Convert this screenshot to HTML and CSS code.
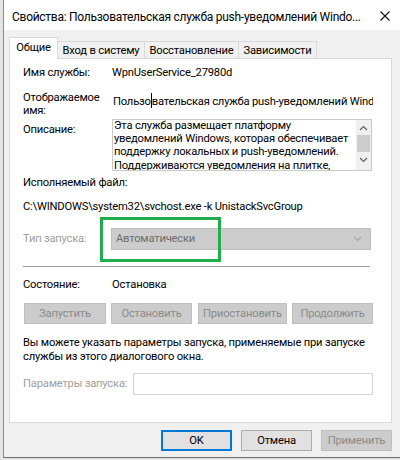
FILE: index.html
```html
<!DOCTYPE html>
<html lang="ru">
<head>
<meta charset="utf-8">
<title>Свойства</title>
<link rel="stylesheet" href="styles.css">
</head>
<body>
<div class="window">
  <div class="titlebar">
    <span class="title">Свойства: Пользовательская служба push-уведомлений Windo...</span>
    <svg class="close" width="10" height="10" viewBox="0 0 10 10"><path d="M0.5 0.5 L9.5 9.5 M9.5 0.5 L0.5 9.5" stroke="#111" stroke-width="1.1" fill="none"/></svg>
  </div>
  <div class="body">
    <div class="tabs">
      <div class="tab active t1">Общие</div>
      <div class="tab t2">Вход в систему</div>
      <div class="tab t3">Восстановление</div>
      <div class="tab t4">Зависимости</div>
    </div>
    <div class="panel">
      <div class="row r-name"><span class="label">Имя службы:</span><span class="value">WpnUserService_27980d</span></div>
      <div class="row r-display"><span class="label two">Отображаемое<br>имя:</span><div class="value display-value">Пользо<span class="caret"></span>вательская служба push-уведомлений Windows</div></div>
      <div class="row r-desc"><span class="label desc-label">Описание:</span>
        <div class="descbox">
          <div class="desctext">Эта служба размещает платформу<br>уведомлений Windows, которая обеспечивает<br>поддержку локальных и push-уведомлений.<br>Поддерживаются уведомления на плитке,</div>
          <div class="scrollbar">
            <svg class="sb-up" width="9" height="6" viewBox="0 0 9 6"><polyline points="1,5 4.5,1.5 8,5" fill="none" stroke="#606060" stroke-width="1.2"/></svg>
            <div class="sb-thumb"></div>
            <svg class="sb-down" width="9" height="6" viewBox="0 0 9 6"><polyline points="1,1 4.5,4.5 8,1" fill="none" stroke="#606060" stroke-width="1.2"/></svg>
          </div>
        </div>
      </div>
      <div class="r-exe-label">Исполняемый файл:</div>
      <div class="r-exe">C:\WINDOWS\system32\svchost.exe -k UnistackSvcGroup</div>
      <div class="row r-type"><span class="label disabled">Тип запуска:</span>
        <div class="combo"><span>Автоматически</span><svg width="9" height="6" viewBox="0 0 9 6"><polyline points="1,1 4.5,4.5 8,1" fill="none" stroke="#a6a6a6" stroke-width="1.1"/></svg></div>
      </div>
      <div class="sep"></div>
      <div class="row r-state"><span class="label">Состояние:</span><span>Остановка</span></div>
      <div class="svc-buttons">
        <button class="btn dis b-start">Запустить</button>
        <button class="btn dis b-stop">Остановить</button>
        <button class="btn dis b-pause">Приостановить</button>
        <button class="btn dis b-cont">Продолжить</button>
      </div>
      <p class="hint">Вы можете указать параметры запуска, применяемые при запуске<br>службы из этого диалогового окна.</p>
      <div class="row r-params"><span class="label disabled params-label">Параметры запуска:</span><div class="input"></div></div>
    </div>
    <div class="footer">
      <button class="btn fb default">OK</button>
      <button class="btn fb">Отмена</button>
      <button class="btn fb dis">Применить</button>
    </div>
  </div>
  <div class="highlight"></div>
</div>
</body>
</html>
```
FILE: styles.css
```css
html, body {
  margin: 0;
  padding: 0;
}
body {
  background: #e4e4e4;
  font-family: Roboto, "Liberation Sans", sans-serif;
  font-size: 11.2px;
  letter-spacing: -0.2px;
  line-height: 14px;
  color: #000;
  width: 400px;
  height: 460px;
  overflow: hidden;
}
.window {
  position: relative;
  margin-left: 3px;
  width: 397px;
  height: 458px;
  box-sizing: border-box;
  border-left: 1px solid #8c8c8c;
  border-bottom: 1px solid #707070;
  background: #f0f0f0;
}
.titlebar {
  height: 30px;
  background: #fff;
  display: flex;
  align-items: center;
  padding-left: 8px;
}
.title {
  flex: 1;
  font-size: 12px;
  letter-spacing: -0.27px;
  white-space: nowrap;
  overflow: hidden;
  padding-top: 3px;
}
.close {
  margin-right: 10px;
  margin-top: 2px;
}
.body {
  padding: 7px 8px 0 5px;
}
.tabs {
  display: flex;
  align-items: flex-end;
  height: 21px;
  position: relative;
  z-index: 1;
}
.tab {
  box-sizing: border-box;
  height: 17px;
  border: 1px solid #d9d9d9;
  border-bottom: none;
  border-left: none;
  background: #f0f0f0;
  display: flex;
  align-items: center;
  justify-content: center;
  white-space: nowrap;
  padding-top: 1px;
}
.tab.active {
  height: 22px;
  margin-bottom: -1px;
  background: #fff;
  border-left: 1px solid #d9d9d9;
  padding-bottom: 2px;
}
.t1 { width: 49px; }
.t2 { width: 87px; }
.t3 { width: 94px; }
.t4 { width: 78px; }
.panel {
  height: 365px;
  box-sizing: border-box;
  background: #fff;
  border: 1px solid #d9d9d9;
  padding: 7px 18px 0 13px;
}
.row {
  display: flex;
}
.label {
  width: 89px;
  flex: none;
  white-space: nowrap;
}
.value {
  white-space: nowrap;
}
.r-display {
  margin-top: 11px;
}
.two {
  line-height: 13px;
}
.display-value {
  width: 260px;
  overflow: hidden;
  padding-top: 2px;
  padding-left: 1px;
}
.caret {
  display: inline-block;
  width: 1px;
  height: 15px;
  background: #000;
  vertical-align: -3px;
}
.r-desc {
  margin-top: 2px;
}
.desc-label {
  padding-top: 4px;
}
.descbox {
  width: 260px;
  height: 52px;
  box-sizing: border-box;
  border: 1px solid #c9c9c9;
  display: flex;
  overflow: hidden;
}
.desctext {
  flex: 1;
  padding-left: 1px;
  white-space: nowrap;
  overflow: hidden;
  line-height: 13.2px;
  margin-top: -1px;
}
.scrollbar {
  width: 15px;
  flex: none;
  background: #f0f0f0;
  display: flex;
  flex-direction: column;
  align-items: center;
}
.sb-up {
  margin-top: 5px;
}
.sb-thumb {
  width: 13px;
  height: 17px;
  margin-top: 4px;
  background: #cdcdcd;
}
.sb-down {
  margin-top: 5px;
}
.r-exe-label {
  margin-top: 5px;
}
.r-exe {
  margin-top: 10px;
  white-space: nowrap;
}
.r-type {
  margin-top: 14px;
  align-items: center;
}
.disabled {
  color: #a0a0a0;
}
.combo {
  width: 260px;
  height: 22px;
  box-sizing: border-box;
  margin-left: -1px;
  background: #cccccc;
  border: 1px solid #bfbfbf;
  display: flex;
  align-items: center;
  justify-content: space-between;
  padding: 0 8px 0 4px;
  color: #6d6d6d;
}
.sep {
  margin-top: 16px;
  width: 347px;
  height: 1px;
  background: #a0a0a0;
}
.r-state {
  margin-top: 11px;
}
.svc-buttons {
  margin-top: 11px;
  display: flex;
}
.btn {
  font: inherit;
  letter-spacing: inherit;
  margin: 0;
  padding: 0;
  height: 21px;
  box-sizing: border-box;
  background: #e1e1e1;
  border: 1px solid #adadad;
  color: #000;
  line-height: 18px;
}
.btn.dis {
  background: #cccccc;
  border-color: #bfbfbf;
  color: #8a8a8a;
}
.b-start { width: 82px; margin-left: 1px; }
.b-stop { width: 81px; margin-left: 5px; }
.b-pause { width: 89px; margin-left: 6px; }
.b-cont { width: 81px; margin-left: 5px; }
.hint {
  margin: 12px 0 0 0;
  line-height: 13.5px;
  white-space: nowrap;
}
.r-params {
  margin-top: 10px;
  align-items: center;
}
.params-label {
  width: 110px;
}
.input {
  width: 241px;
  height: 22px;
  box-sizing: border-box;
  border: 1px solid #d4d4d4;
  background: #fff;
}
.footer {
  margin-top: 7px;
  display: flex;
  justify-content: flex-end;
  gap: 9px;
}
.fb {
  width: 71px;
}
.fb.default {
  border-color: #0078d7;
  box-shadow: inset 0 0 0 1px #0078d7;
}
.highlight {
  position: absolute;
  left: 96px;
  top: 217px;
  width: 121px;
  height: 45px;
  box-sizing: border-box;
  border: 3px solid #1fae4b;
}
```
